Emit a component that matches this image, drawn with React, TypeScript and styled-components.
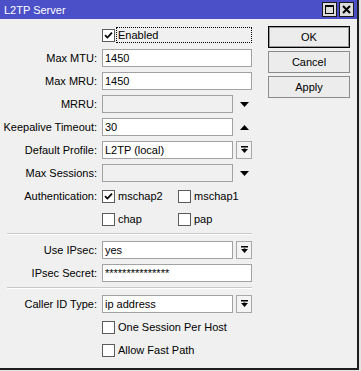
import React from "react";
import styled, { createGlobalStyle } from "styled-components";

const GlobalStyle = createGlobalStyle`
  html, body {
    margin: 0;
    padding: 0;
  }
  body {
    width: 361px;
    height: 371px;
    overflow: hidden;
    background: #e4e4e4;
    font-family: "Liberation Sans", Arial, sans-serif;
    font-size: 11px;
    color: #000;
  }
`;

const Window = styled.div`
  width: 359px;
  height: 370px;
  box-sizing: border-box;
  background: #f0f0f0;
  border-right: 2px solid #1e1e1e;
  border-bottom: 2px solid #1e1e1e;
  display: flex;
  flex-direction: column;
`;

const TitleBar = styled.div`
  height: 19px;
  flex: none;
  background: #4c50c8;
  color: #fff;
  display: flex;
  align-items: center;
  padding: 0 3px 0 4px;
`;

const Title = styled.span`
  flex: 1;
  font-size: 11px;
`;

const TitleButtons = styled.div`
  display: flex;
  gap: 2px;
`;

const TitleButton = styled.div`
  width: 15px;
  height: 15px;
  box-sizing: border-box;
  border: 1px solid #1a1a1a;
  background: #dcdcdc;
  display: flex;
  align-items: center;
  justify-content: center;
`;

const Body = styled.div`
  display: flex;
  padding: 7px 0 0 2px;
`;

const Form = styled.div`
  display: grid;
  grid-template-columns: 95px 150px;
  column-gap: 5px;
  row-gap: 5px;
  align-content: start;
`;

const Label = styled.div`
  height: 18px;
  line-height: 18px;
  text-align: right;
  white-space: nowrap;
`;

const Separator = styled.div`
  grid-column: 1 / -1;
  height: 3px;
  margin-left: 5px;
  border-top: 1px solid #c9c9c9;
  box-shadow: inset 0 1px 0 #fff;
  box-sizing: border-box;
`;

const Field = styled.div`
  display: flex;
  gap: 3px;
  height: 18px;
`;

const Input = styled.div<{ $disabled?: boolean }>`
  flex: 1;
  box-sizing: border-box;
  height: 18px;
  border: 1px solid #a2a2a2;
  background: ${(p) => (p.$disabled ? "#f0f0f0" : "#fff")};
  padding: 0 2px;
  line-height: 16px;
  white-space: nowrap;
  overflow: hidden;
`;

const Suffix = styled.div`
  width: 16px;
  height: 18px;
  display: flex;
  align-items: center;
  justify-content: center;
`;

const DropButton = styled.div`
  width: 16px;
  height: 18px;
  box-sizing: border-box;
  border: 1px solid #a8a8a8;
  background: #f4f4f4;
  display: flex;
  align-items: center;
  justify-content: center;
`;

const CheckRow = styled.div<{ $cols?: number }>`
  height: 18px;
  display: grid;
  grid-template-columns: ${(p) => (p.$cols === 2 ? "76px 74px" : "1fr")};
`;

const CheckItem = styled.div`
  display: flex;
  align-items: center;
  gap: 3px;
  white-space: nowrap;
`;

const Box = styled.span`
  width: 13px;
  height: 13px;
  flex: none;
  box-sizing: border-box;
  border: 1px solid #5c5c5c;
  background: #fff;
  display: inline-flex;
  align-items: center;
  justify-content: center;
`;

const FocusText = styled.span`
  flex: 1;
  height: 16px;
  line-height: 15px;
  box-sizing: border-box;
  border: 1px dotted #000;
  margin-left: -2px;
  padding-left: 1px;
`;

const Buttons = styled.div`
  display: flex;
  flex-direction: column;
  gap: 3px;
  margin-left: 16px;
`;

const Button = styled.div<{ $default?: boolean }>`
  width: 82px;
  height: 22px;
  box-sizing: border-box;
  border: 1px solid ${(p) => (p.$default ? "#000" : "#8c8c8c")};
  box-shadow: ${(p) => (p.$default ? "inset 0 0 0 1px #9a9a9a" : "none")};
  background: #ececec;
  display: flex;
  align-items: center;
  justify-content: center;
`;

const Check = ({ checked }: { checked?: boolean }) => (
  <Box>
    {checked && (
      <svg width="9" height="9" viewBox="0 0 9 9">
        <path d="M1 4.2 L3.4 6.6 L8 1.6" fill="none" stroke="#000" strokeWidth="1.7" />
      </svg>
    )}
  </Box>
);

const Arrow = ({ up }: { up?: boolean }) => (
  <Suffix>
    <svg width="9" height="5" viewBox="0 0 9 5">
      <polygon points={up ? "0,5 9,5 4.5,0" : "0,0 9,0 4.5,5"} fill="#000" />
    </svg>
  </Suffix>
);

const Drop = () => (
  <DropButton>
    <svg width="7" height="8" viewBox="0 0 7 8">
      <rect x="0" y="0" width="7" height="1.5" fill="#000" />
      <polygon points="0,3 7,3 3.5,7" fill="#000" />
      <rect x="2.5" y="2.5" width="2" height="2" fill="#000" />
    </svg>
  </DropButton>
);

const Row = ({ label, children }: { label: string; children: React.ReactNode }) => (
  <>
    <Label>{label}</Label>
    {children}
  </>
);

export default function App() {
  return (
    <>
      <GlobalStyle />
      <Window>
        <TitleBar>
          <Title>L2TP Server</Title>
          <TitleButtons>
            <TitleButton>
              <svg width="9" height="9" viewBox="0 0 9 9">
                <rect x="0.5" y="0.5" width="8" height="8" fill="none" stroke="#000" />
                <rect x="0" y="0" width="9" height="2" fill="#000" />
              </svg>
            </TitleButton>
            <TitleButton>
              <svg width="9" height="9" viewBox="0 0 9 9">
                <path d="M1 1 L8 8 M8 1 L1 8" stroke="#000" strokeWidth="2" />
              </svg>
            </TitleButton>
          </TitleButtons>
        </TitleBar>
        <Body>
          <Form>
            <Row label="">
              <CheckRow>
                <CheckItem>
                  <Check checked />
                  <FocusText>Enabled</FocusText>
                </CheckItem>
              </CheckRow>
            </Row>
            <Row label="Max MTU:">
              <Field>
                <Input>1450</Input>
              </Field>
            </Row>
            <Row label="Max MRU:">
              <Field>
                <Input>1450</Input>
              </Field>
            </Row>
            <Row label="MRRU:">
              <Field>
                <Input $disabled />
                <Arrow />
              </Field>
            </Row>
            <Row label="Keepalive Timeout:">
              <Field>
                <Input>30</Input>
                <Arrow up />
              </Field>
            </Row>
            <Row label="Default Profile:">
              <Field>
                <Input>L2TP (local)</Input>
                <Drop />
              </Field>
            </Row>
            <Row label="Max Sessions:">
              <Field>
                <Input $disabled />
                <Arrow />
              </Field>
            </Row>
            <Row label="Authentication:">
              <CheckRow $cols={2}>
                <CheckItem>
                  <Check checked />
                  mschap2
                </CheckItem>
                <CheckItem>
                  <Check />
                  mschap1
                </CheckItem>
              </CheckRow>
            </Row>
            <Row label="">
              <CheckRow $cols={2}>
                <CheckItem>
                  <Check />
                  chap
                </CheckItem>
                <CheckItem>
                  <Check />
                  pap
                </CheckItem>
              </CheckRow>
            </Row>
            <Separator />
            <Row label="Use IPsec:">
              <Field>
                <Input>yes</Input>
                <Drop />
              </Field>
            </Row>
            <Row label="IPsec Secret:">
              <Field>
                <Input>***************</Input>
              </Field>
            </Row>
            <Separator />
            <Row label="Caller ID Type:">
              <Field>
                <Input>ip address</Input>
                <Drop />
              </Field>
            </Row>
            <Row label="">
              <CheckRow>
                <CheckItem>
                  <Check />
                  One Session Per Host
                </CheckItem>
              </CheckRow>
            </Row>
            <Row label="">
              <CheckRow>
                <CheckItem>
                  <Check />
                  Allow Fast Path
                </CheckItem>
              </CheckRow>
            </Row>
          </Form>
          <Buttons>
            <Button $default>OK</Button>
            <Button>Cancel</Button>
            <Button>Apply</Button>
          </Buttons>
        </Body>
      </Window>
    </>
  );
}
